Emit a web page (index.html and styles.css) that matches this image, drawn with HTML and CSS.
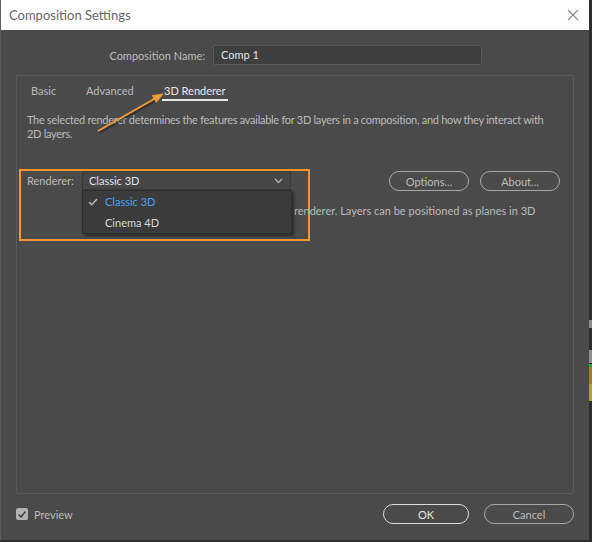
FILE: index.html
```html
<!DOCTYPE html>
<html>
<head>
<meta charset="utf-8">
<link rel="stylesheet" href="styles.css">
</head>
<body>
<div class="screen">
  <div class="window">
    <div class="titlebar">
      <span class="title">Composition Settings</span>
      <svg class="close" width="12" height="12" viewBox="0 0 12 12"><path d="M1 1L11 11M11 1L1 11" stroke="#8a8a8a" stroke-width="1.1" fill="none"/></svg>
    </div>
    <div class="body">
      <div class="name-row">
        <span class="label">Composition Name:</span>
        <div class="input">Comp 1</div>
      </div>
      <div class="panel">
        <div class="tabs">
          <span class="tab t-basic">Basic</span>
          <span class="tab t-adv">Advanced</span>
          <span class="tab active">3D Renderer</span>
        </div>
        <p class="desc">The selected renderer determines the features available for 3D layers in a composition, and how they interact with 2D layers.</p>
        <div class="renderer-row">
          <div class="highlight">
            <span class="label">Renderer:</span>
            <div class="select-wrap">
              <div class="select">
                <span>Classic 3D</span>
                <svg width="9" height="6" viewBox="0 0 9 6"><path d="M1 1L4.5 4.5L8 1" stroke="#bdbdbd" stroke-width="1.1" fill="none"/></svg>
              </div>
              <p class="info">Classic 3D is the legacy Adobe After Effects renderer. Layers can be positioned as planes in 3D</p>
              <div class="menu">
                <div class="item selected">
                  <svg class="check" width="10" height="8" viewBox="0 0 10 8"><path d="M1 4L3.8 6.8L9 1" stroke="#bdbdbd" stroke-width="1.4" fill="none"/></svg>
                  <span>Classic 3D</span>
                </div>
                <div class="item"><span>Cinema 4D</span></div>
              </div>
            </div>
          </div>
          <div class="buttons">
            <span class="btn">Options...</span>
            <span class="btn">About...</span>
          </div>
        </div>
        <svg class="arrow" width="72" height="48" viewBox="0 0 72 48">
          <path d="M4 45L60 13" stroke="rgba(0,0,0,0.3)" stroke-width="2.5" fill="none"/>
          <path d="M3 43L60 10.5" stroke="#f39a3a" stroke-width="2" fill="none"/>
          <path d="M68 6L61.3 14.4L57.3 7.5Z" fill="#f39a3a" stroke="#f39a3a" stroke-width="0.8"/>
        </svg>
      </div>
      <div class="footer">
        <div class="preview">
          <span class="checkbox"><svg width="10" height="9" viewBox="0 0 10 9"><path d="M1.5 4.5L4 7L8.5 1.5" stroke="#444" stroke-width="1.6" fill="none"/></svg></span>
          <span>Preview</span>
        </div>
        <div class="actions">
          <span class="btn ok">OK</span>
          <span class="btn cancel">Cancel</span>
        </div>
      </div>
    </div>
  </div>
  <div class="side">
    <span class="blk b1"></span>
    <span class="blk b2"></span>
    <span class="blk b3"></span>
    <span class="blk b4"></span>
    <span class="blk b5"></span>
  </div>
</div>
</body>
</html>
```
FILE: styles.css
```css
* { box-sizing: border-box; }
html, body { margin: 0; padding: 0; }
body {
  width: 592px;
  height: 542px;
  overflow: hidden;
  background: #2f2f2f;
  font-family: Lato, "Open Sans", sans-serif;
  font-size: 11px;
  color: #bcbcbc;
}
.screen { display: flex; width: 592px; height: 542px; }
.window {
  width: 589px;
  height: 540px;
  flex-shrink: 0;
  background: #4a4a4a;
  display: flex;
  flex-direction: column;
  border-left: 1px solid #5c5c5c;
}
.titlebar {
  height: 30px;
  background: #ffffff;
  display: flex;
  align-items: center;
  justify-content: space-between;
  padding: 0 10px 0 8px;
}
.title { color: #666666; font-size: 13px; }
.body {
  flex: 1;
  display: flex;
  flex-direction: column;
  padding: 15px 15px 0 15px;
}
.name-row {
  display: flex;
  align-items: center;
  height: 20px;
}
.name-row .label { width: 189px; flex-shrink: 0; text-align: right; margin-right: 8px; color: #bcbcbc; }
.input {
  width: 269px;
  height: 20px;
  background: #3e3e3e;
  border: 1px solid #595959;
  border-radius: 2px;
  padding: 0 0 0 7px;
  line-height: 18px;
  color: #e2e2e2;
}
.panel {
  position: relative;
  margin-top: 10px;
  height: 419px;
  border: 1px solid #5a5a5a;
  border-radius: 2px;
  padding: 0 10px;
}
.tabs {
  display: flex;
  height: 25px;
  padding-left: 4px;
  align-items: flex-end;
}
.tab { color: #bcbcbc; padding-bottom: 2px; border-bottom: 2px solid transparent; }
.t-basic { width: 55px; }
.t-adv { width: 76px; }
.tab.active { color: #e8e8e8; border-bottom-color: #e8e8e8; padding: 0 2px 2px 2px; }
.desc {
  margin: 12px 0 0 0;
  line-height: 14px;
  width: 525px;
  letter-spacing: -0.28px;
  color: #bcbcbc;
}
.renderer-row {
  margin-top: 28px;
  display: flex;
  justify-content: space-between;
  align-items: flex-start;
}
.highlight {
  display: flex;
  align-items: flex-start;
  width: 291px;
  height: 72px;
  margin-left: -8px;
  border: 2px solid #f7962c;
  padding: 0 0 0 6px;
  flex-shrink: 0;
}
.highlight .label { line-height: 19px; width: 55px; flex-shrink: 0; }
.select-wrap { position: relative; flex-shrink: 0; width: 209px; }
.select {
  width: 209px;
  height: 19px;
  border: 1px solid #3a3a3a;
  background: #464646;
  display: flex;
  align-items: center;
  justify-content: space-between;
  padding: 0 7px 0 6px;
  color: #e4e4e4;
}
.info {
  margin: 13px 0 0 0;
  line-height: 15px;
  white-space: nowrap;
  color: #bcbcbc;
}
.menu {
  position: absolute;
  top: 19px;
  left: 0;
  width: 210px;
  height: 44px;
  background: #3b3b3b;
  border: 1px solid #2e2e2e;
  box-shadow: 2px 2px 3px rgba(0,0,0,0.45);
}
.item {
  height: 21px;
  display: flex;
  align-items: center;
  padding-left: 22px;
  position: relative;
  color: #d8d8d8;
}
.item.selected { color: #4aa3ea; }
.check { position: absolute; left: 5px; top: 7px; }
.buttons { display: flex; gap: 11px; margin-top: 2px; margin-right: 3px; }
.btn {
  display: inline-flex;
  align-items: center;
  justify-content: center;
  height: 20px;
  border: 1px solid #a8a8a8;
  border-radius: 10px;
  color: #bcbcbc;
  width: 80px;
}
.arrow { position: absolute; left: 78px; top: 12px; }
.footer {
  display: flex;
  justify-content: space-between;
  align-items: center;
  height: 20px;
  margin-top: 10px;
}
.preview { display: flex; align-items: center; gap: 6px; }
.checkbox {
  width: 12px; height: 12px;
  background: #b4b4b4;
  border-radius: 2px;
  display: inline-flex;
  align-items: center;
  justify-content: center;
}
.actions { display: flex; gap: 15px; }
.btn.ok { width: 86px; color: #e6e6e6; border-color: #dcdcdc; }
.btn.cancel { width: 90px; }
.side {
  flex: 1;
  display: flex;
  flex-direction: column;
  background: #2d2d2d;
  padding-top: 320px;
}
.blk { display: block; width: 3px; }
.b1 { height: 8px; background: #8a8a8a; margin-bottom: 22px; }
.b2 { height: 13px; background: #8f8f8f; }
.b3 { height: 3px; background: #22b022; margin-top: 1px; }
.b4 { height: 17px; background: #a07b2a; }
.b5 { height: 17px; background: #b0a52a; }
```
